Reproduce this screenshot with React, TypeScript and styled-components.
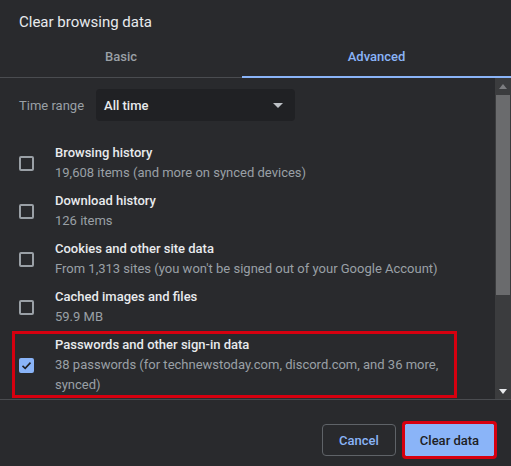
import React from "react";
import styled, { createGlobalStyle } from "styled-components";

const Global = createGlobalStyle`
  html, body { margin: 0; padding: 0; background: #292a2d; }
  body { font-family: Roboto, "Noto Sans", "Liberation Sans", sans-serif; }
  * { box-sizing: border-box; }
`;

const Dialog = styled.div`
  width: 511px;
  height: 466px;
  background: #292a2d;
  display: flex;
  flex-direction: column;
  overflow: hidden;
  color: #e8eaed;
`;

const Title = styled.h1`
  margin: 0;
  padding: 12px 19px 0;
  height: 37px;
  font-size: 15px;
  line-height: 20px;
  font-weight: 400;
  color: #e8eaed;
`;

const Tabs = styled.div`
  display: flex;
  height: 41px;
  border-bottom: 1px solid #4a4c50;
`;

const Tab = styled.div<{ $active?: boolean; $width?: number }>`
  ${(p) => (p.$width ? `width: ${p.$width}px;` : "flex: 1;")}
  display: flex;
  align-items: center;
  justify-content: center;
  font-size: 13px;
  font-weight: 500;
  color: ${(p) => (p.$active ? "#8ab4f8" : "#9aa0a6")};
  border-bottom: 2px solid ${(p) => (p.$active ? "#8ab4f8" : "transparent")};
  margin-bottom: -1px;
`;

const Body = styled.div`
  display: flex;
  height: 321px;
`;

const Content = styled.div`
  flex: 1;
  overflow: hidden;
  padding-top: 11px;
`;

const RangeRow = styled.div`
  display: flex;
  align-items: center;
  padding-left: 19px;
  gap: 12px;
  margin-bottom: 18px;
`;

const RangeLabel = styled.span`
  font-size: 13px;
  color: #9aa0a6;
`;

const Select = styled.div`
  width: 199px;
  height: 32px;
  border-radius: 4px;
  background: #202124;
  display: flex;
  align-items: center;
  justify-content: space-between;
  padding: 0 8px;
  font-size: 13px;
  font-weight: 500;
  color: #e8eaed;
`;

const Arrow = styled.span`
  width: 0;
  height: 0;
  border-left: 5px solid transparent;
  border-right: 5px solid transparent;
  border-top: 5px solid #bdc1c6;
  margin-right: 4px;
`;

const Row = styled.div<{ $highlight?: boolean }>`
  display: flex;
  align-items: center;
  padding: ${(p) => (p.$highlight ? "1px 0 0 4px" : "4px 0 4px 19px")};
  margin: ${(p) => (p.$highlight ? "0 38px 0 12px" : "0")};
  border: ${(p) => (p.$highlight ? "3px solid #d6000f" : "none")};
`;

const Box = styled.span<{ $checked?: boolean }>`
  flex: none;
  width: 15px;
  height: 15px;
  border-radius: 2px;
  border: 2px solid ${(p) => (p.$checked ? "#8ab4f8" : "#9aa0a6")};
  background: ${(p) => (p.$checked ? "#8ab4f8" : "transparent")};
  display: flex;
  align-items: center;
  justify-content: center;
  margin-right: 21px;
`;

const Texts = styled.div`
  display: flex;
  flex-direction: column;
`;

const Label = styled.div`
  font-size: 13px;
  line-height: 20px;
  font-weight: 500;
  color: #e8eaed;
`;

const Sub = styled.div`
  font-size: 13px;
  line-height: 20px;
  color: #9aa0a6;
`;

const Scrollbar = styled.div`
  width: 16px;
  background: #3b3c3e;
  display: flex;
  flex-direction: column;
  align-items: center;
  padding-top: 1px;
`;

const ScrollArrow = styled.span<{ $down?: boolean }>`
  width: 0;
  height: 0;
  margin: 5px 0;
  border-left: 4px solid transparent;
  border-right: 4px solid transparent;
  ${(p) =>
    p.$down
      ? "border-top: 5px solid #e8eaed;"
      : "border-bottom: 5px solid #7c7d80;"}
`;

const Thumb = styled.div`
  width: 14px;
  height: 200px;
  background: #6a6b6d;
  margin-top: 1px;
`;

const Spacer = styled.div`
  flex: 1;
`;

const Footer = styled.div`
  border-top: 1px solid #4a4c50;
  flex: 1;
  display: flex;
  justify-content: flex-end;
  align-items: flex-start;
  padding: 24px 17px 0 0;
  gap: 9px;
`;

const Button = styled.button<{ $primary?: boolean }>`
  height: 32px;
  padding: 0;
  white-space: nowrap;
  border-radius: ${(p) => (p.$primary ? "1px" : "4px")};
  font-family: Roboto, "Noto Sans", "Liberation Sans", sans-serif;
  font-size: 13px;
  font-weight: 500;
  cursor: pointer;
  border: 1px solid ${(p) => (p.$primary ? "#8ab4f8" : "#5f6368")};
  background: ${(p) => (p.$primary ? "#8ab4f8" : "transparent")};
  color: ${(p) => (p.$primary ? "#202124" : "#8ab4f8")};
  ${(p) =>
    p.$primary ? "outline: 3px solid #d6000f; width: 89px;" : "width: 74px;"}
`;

type Item = { label: string; sub: string; checked?: boolean };

const items: Item[] = [
  { label: "Browsing history", sub: "19,608 items (and more on synced devices)" },
  { label: "Download history", sub: "126 items" },
  {
    label: "Cookies and other site data",
    sub: "From 1,313 sites (you won't be signed out of your Google Account)",
  },
  { label: "Cached images and files", sub: "59.9 MB" },
  {
    label: "Passwords and other sign-in data",
    sub: "38 passwords (for technewstoday.com, discord.com, and 36 more, synced)",
    checked: true,
  },
];

const Check = () => (
  <svg width="11" height="11" viewBox="0 0 11 11">
    <path d="M1.5 5.8 L4.2 8.3 L9.5 2.6" fill="none" stroke="#202124" strokeWidth="1.6" />
  </svg>
);

export default function App() {
  return (
    <>
      <Global />
      <Dialog>
        <Title>Clear browsing data</Title>
        <Tabs>
          <Tab $width={242}>Basic</Tab>
          <Tab $active>Advanced</Tab>
        </Tabs>
        <Body>
          <Content>
            <RangeRow>
              <RangeLabel>Time range</RangeLabel>
              <Select>
                All time
                <Arrow />
              </Select>
            </RangeRow>
            {items.map((it) => (
              <Row key={it.label} $highlight={it.checked}>
                <Box $checked={it.checked}>{it.checked && <Check />}</Box>
                <Texts>
                  <Label>{it.label}</Label>
                  <Sub>{it.sub}</Sub>
                </Texts>
              </Row>
            ))}
          </Content>
          <Scrollbar>
            <ScrollArrow />
            <Thumb />
            <Spacer />
            <ScrollArrow $down />
          </Scrollbar>
        </Body>
        <Footer>
          <Button>Cancel</Button>
          <Button $primary>Clear data</Button>
        </Footer>
      </Dialog>
    </>
  );
}
